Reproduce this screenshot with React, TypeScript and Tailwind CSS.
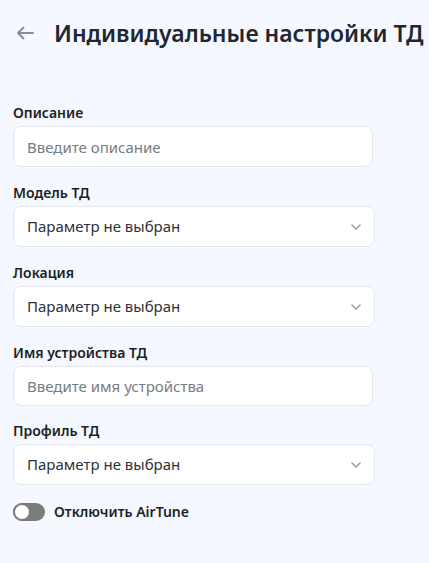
import React, { useState } from "react";

const font = { fontFamily: '"Noto Sans", "Open Sans", sans-serif' };

const Label: React.FC<{ children: React.ReactNode }> = ({ children }) => (
  <div className="text-[14px] leading-[20px] font-semibold text-[#1c1f24] mb-[3px]">{children}</div>
);

const TextField: React.FC<{ label: string; placeholder: string; h?: string }> = ({ label, placeholder, h = "h-[41px]" }) => (
  <div>
    <Label>{label}</Label>
    <input
      placeholder={placeholder}
      className={`w-[360px] ${h} rounded-[8px] border border-[#e4e7ec] bg-white px-[13px] text-[15px] text-[#2b2f36] placeholder:text-[#767b84] outline-none`}
    />
  </div>
);

const SelectField: React.FC<{ label: string }> = ({ label }) => (
  <div>
    <Label>{label}</Label>
    <div className="w-[362px] h-[41px] rounded-[8px] border border-[#e4e7ec] bg-white pl-[13px] pr-[13px] flex items-center justify-between">
      <span className="text-[15px] text-[#2e3238]">Параметр не выбран</span>
      <svg className="shrink-0" width="10" height="6" viewBox="0 0 10 6" fill="none">
        <path d="M1 1l4 4 4-4" stroke="#9aa0a8" strokeWidth="1.6" strokeLinecap="round" strokeLinejoin="round" />
      </svg>
    </div>
  </div>
);

export default function App() {
  const [off, setOff] = useState(false);

  return (
    <div style={font} className="w-[429px] h-[563px] bg-[#f5f8fe] overflow-hidden">
      <div className="flex items-center h-[34px] mt-[16px] pl-[16px]">
        <svg className="shrink-0" width="18" height="14" viewBox="0 0 18 14" fill="none">
          <path d="M17 7H2M7.5 1.5L2 7l5.5 5.5" stroke="#8a8d93" strokeWidth="1.8" strokeLinecap="round" strokeLinejoin="round" />
        </svg>
        <h1 className="ml-[20px] text-[23px] leading-[34px] font-semibold text-[#1e2732] whitespace-nowrap">
          Индивидуальные настройки ТД
        </h1>
      </div>

      <div className="mt-[53px] pl-[13px] flex flex-col gap-[16px]">
        <TextField label="Описание" placeholder="Введите описание" />
        <SelectField label="Модель ТД" />
        <SelectField label="Локация" />
        <TextField label="Имя устройства ТД" placeholder="Введите имя устройства" h="h-[40px]" />
        <div className="-mt-[1px]">
          <SelectField label="Профиль ТД" />
        </div>

        <label className="flex items-center gap-[9px] mt-[1px] cursor-pointer">
          <button
            type="button"
            onClick={() => setOff(!off)}
            className={`relative shrink-0 w-[32px] h-[18px] rounded-full ${off ? "bg-[#3b82f6]" : "bg-[#7c7c7c]"}`}
          >
            <span
              className={`absolute top-0 w-[18px] h-[18px] rounded-full bg-white border-2 border-[#7c7c7c] ${off ? "left-[14px]" : "left-0"}`}
            />
          </button>
          <span className="text-[14px] leading-[20px] font-semibold text-[#1c1f24]">Отключить AirTune</span>
        </label>
      </div>
    </div>
  );
}
